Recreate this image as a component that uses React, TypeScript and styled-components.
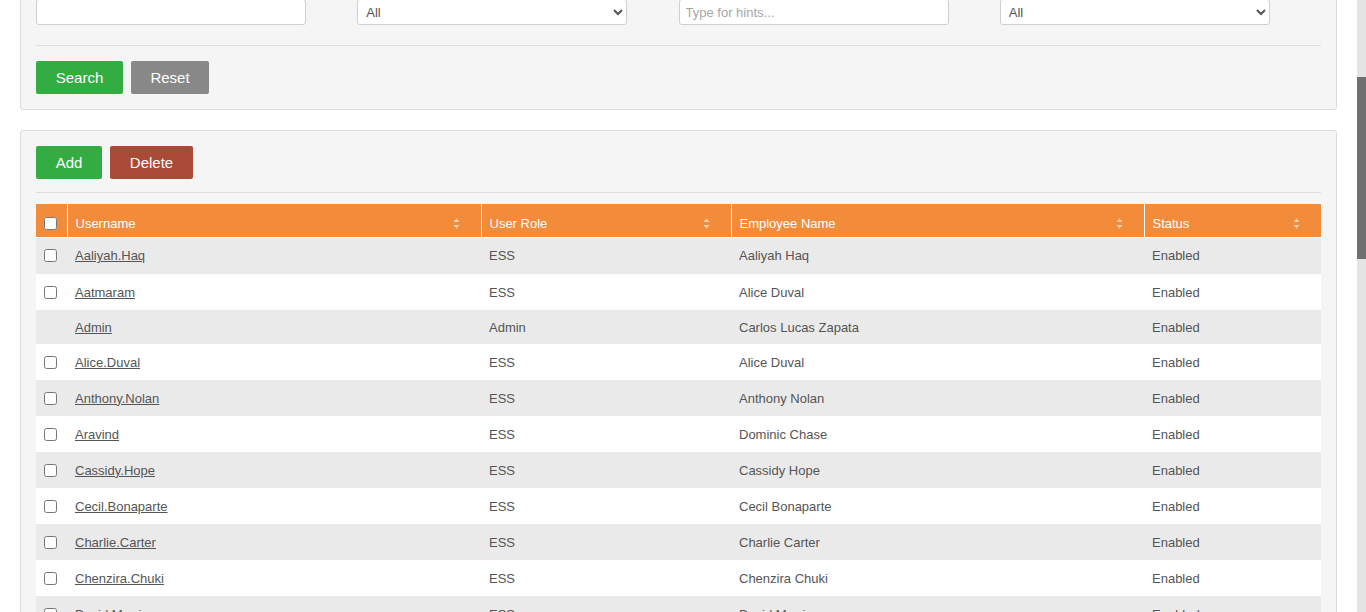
import React from "react";
import styled, { createGlobalStyle } from "styled-components";

const Global = createGlobalStyle`
  html, body { margin: 0; padding: 0; background: #fff; overflow: hidden; height: 612px; }
  body { font-family: "Liberation Sans", Arial, sans-serif; font-size: 13px; color: #555; }
  * { box-sizing: border-box; }
`;

const Page = styled.div`
  padding: 0 29px 0 20px;
  margin-top: -17px;
  display: flex;
  flex-direction: column;
  gap: 20px;
`;

const Panel = styled.section`
  background: #f5f5f5;
  border: 1px solid #dcdcdc;
  border-radius: 3px;
  padding: 15px;
`;

const FilterGrid = styled.div`
  display: grid;
  grid-template-columns: repeat(4, 1fr);
`;

const TextInput = styled.input`
  width: 270px;
  height: 26px;
  border: 1px solid #cfcfcf;
  border-radius: 3px;
  background: #fff;
  padding: 0 6px;
  font: 13px "Liberation Sans", Arial, sans-serif;
  color: #555;
  &::placeholder { color: #a6a6a6; }
`;

const Select = styled.select`
  width: 270px;
  height: 26px;
  border: 1px solid #cfcfcf;
  border-radius: 3px;
  background: #fff;
  padding: 0 4px;
  font: 13px "Liberation Sans", Arial, sans-serif;
  color: #555;
`;

const Divider = styled.hr<{ $top: number; $bottom: number }>`
  border: 0;
  border-top: 1px solid #dddddd;
  margin: ${(p) => p.$top}px 0 ${(p) => p.$bottom}px;
`;

const ButtonRow = styled.div`
  display: flex;
  gap: 8px;
`;

const Button = styled.button<{ $bg: string; $w: number }>`
  height: 33px;
  width: ${(p) => p.$w}px;
  background: ${(p) => p.$bg};
  color: #fff;
  border: 0;
  border-radius: 2px;
  font: 15px "Liberation Sans", Arial, sans-serif;
  padding: 0;
`;

const Table = styled.table`
  width: 100%;
  border-collapse: collapse;
  table-layout: fixed;
`;

const Th = styled.th<{ $w: number }>`
  width: ${(p) => p.$w}px;
  height: 33px;
  background: #f38c3a;
  color: #fff;
  font-weight: normal;
  text-align: left;
  padding: 6px 8px 0;
  border-left: 1px solid #fff;
  border-bottom: 1px solid #fff;
  &:first-child { border-left: 0; }
`;

const ThInner = styled.div`
  display: flex;
  align-items: center;
  justify-content: space-between;
  padding-right: 13px;
`;

const Tr = styled.tr<{ $alt: boolean; $h: number }>`
  height: ${(p) => p.$h}px;
  background: ${(p) => (p.$alt ? "#eaeaea" : "#fff")};
`;

const Td = styled.td`
  padding: 0 8px;
  color: #555;
  vertical-align: middle;
`;

const Check = styled.input`
  margin: 0;
  width: 13px;
  height: 13px;
  display: block;
`;

const UserLink = styled.a`
  color: #555;
  text-decoration: underline;
`;

const ScrollTrack = styled.div`
  position: fixed;
  top: 0;
  right: 0;
  width: 9px;
  height: 100%;
  background: #e4e4e4;
`;

const ScrollThumb = styled.div`
  position: absolute;
  top: 77px;
  left: 0;
  width: 9px;
  height: 182px;
  background: #707070;
`;

const SortIcon = () => (
  <svg width="7" height="11" viewBox="0 0 7 11" aria-hidden>
    <path d="M3.5 0.5 L6.5 4 H0.5 Z" fill="rgba(255,255,255,0.6)" />
    <path d="M3.5 10.5 L6.5 7 H0.5 Z" fill="rgba(255,255,255,0.6)" />
  </svg>
);

type Row = { user: string; role: string; name: string; status: string; check: boolean };

const rows: Row[] = [
  { user: "Aaliyah.Haq", role: "ESS", name: "Aaliyah Haq", status: "Enabled", check: true },
  { user: "Aatmaram", role: "ESS", name: "Alice Duval", status: "Enabled", check: true },
  { user: "Admin", role: "Admin", name: "Carlos Lucas Zapata", status: "Enabled", check: false },
  { user: "Alice.Duval", role: "ESS", name: "Alice Duval", status: "Enabled", check: true },
  { user: "Anthony.Nolan", role: "ESS", name: "Anthony Nolan", status: "Enabled", check: true },
  { user: "Aravind", role: "ESS", name: "Dominic Chase", status: "Enabled", check: true },
  { user: "Cassidy.Hope", role: "ESS", name: "Cassidy Hope", status: "Enabled", check: true },
  { user: "Cecil.Bonaparte", role: "ESS", name: "Cecil Bonaparte", status: "Enabled", check: true },
  { user: "Charlie.Carter", role: "ESS", name: "Charlie Carter", status: "Enabled", check: true },
  { user: "Chenzira.Chuki", role: "ESS", name: "Chenzira Chuki", status: "Enabled", check: true },
  { user: "David.Morris", role: "ESS", name: "David Morris", status: "Enabled", check: true },
];

const columns = [
  { label: "Username", w: 414 },
  { label: "User Role", w: 250 },
  { label: "Employee Name", w: 413 },
  { label: "Status", w: 177 },
];

export default function App() {
  return (
    <>
      <Global />
      <Page>
        <Panel>
          <FilterGrid>
            <TextInput type="text" aria-label="Username" />
            <Select defaultValue="All" aria-label="User Role">
              <option>All</option>
              <option>Admin</option>
              <option>ESS</option>
            </Select>
            <TextInput type="text" placeholder="Type for hints..." aria-label="Employee Name" />
            <Select defaultValue="All" aria-label="Status">
              <option>All</option>
              <option>Enabled</option>
              <option>Disabled</option>
            </Select>
          </FilterGrid>
          <Divider $top={20} $bottom={15} />
          <ButtonRow>
            <Button $bg="#33ad42" $w={87}>Search</Button>
            <Button $bg="#888888" $w={78}>Reset</Button>
          </ButtonRow>
        </Panel>
        <Panel>
          <ButtonRow>
            <Button $bg="#33ad42" $w={66}>Add</Button>
            <Button $bg="#a94a36" $w={83}>Delete</Button>
          </ButtonRow>
          <Divider $top={13} $bottom={11} />
          <Table>
            <thead>
              <tr>
                <Th $w={31}>
                  <Check type="checkbox" />
                </Th>
                {columns.map((c) => (
                  <Th key={c.label} $w={c.w}>
                    <ThInner>
                      <span>{c.label}</span>
                      <SortIcon />
                    </ThInner>
                  </Th>
                ))}
              </tr>
            </thead>
            <tbody>
              {rows.map((r, i) => (
                <Tr key={r.user} $alt={i % 2 === 0} $h={i === 0 ? 37 : r.check ? 36 : 34}>
                  <Td>{r.check ? <Check type="checkbox" /> : null}</Td>
                  <Td>
                    <UserLink href="#">{r.user}</UserLink>
                  </Td>
                  <Td>{r.role}</Td>
                  <Td>{r.name}</Td>
                  <Td>{r.status}</Td>
                </Tr>
              ))}
            </tbody>
          </Table>
        </Panel>
      </Page>
      <ScrollTrack>
        <ScrollThumb />
      </ScrollTrack>
    </>
  );
}
